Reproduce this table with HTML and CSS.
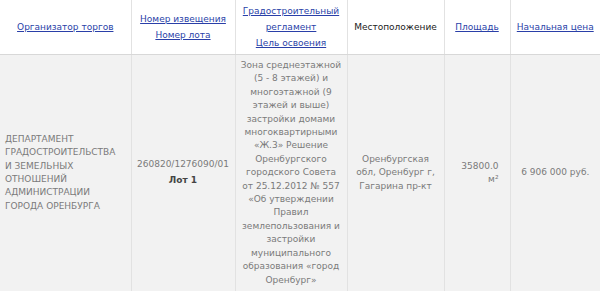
FILE: index.html
```html
<!DOCTYPE html>
<html>
<head>
<meta charset="utf-8">
<link rel="stylesheet" href="styles.css">
</head>
<body>
<table class="lots">
  <colgroup>
    <col class="c1"><col class="c2"><col class="c3"><col class="c4"><col class="c5"><col class="c6">
  </colgroup>
  <thead>
    <tr>
      <th><a href="#">Организатор торгов</a></th>
      <th><a href="#">Номер извещения</a><br><a href="#">Номер лота</a></th>
      <th><a href="#">Градостроительный регламент</a><br><a href="#">Цель освоения</a></th>
      <th>Местоположение</th>
      <th><a href="#">Площадь</a></th>
      <th><a href="#">Начальная цена</a></th>
    </tr>
  </thead>
  <tbody>
    <tr>
      <td class="left">ДЕПАРТАМЕНТ ГРАДОСТРОИТЕЛЬСТВА И ЗЕМЕЛЬНЫХ ОТНОШЕНИЙ АДМИНИСТРАЦИИ ГОРОДА ОРЕНБУРГА</td>
      <td><div>260820/1276090/01</div><div class="lot">Лот 1</div></td>
      <td class="zone">Зона среднеэтажной (5 - 8 этажей) и многоэтажной (9 этажей и выше) застройки домами многоквартирными «Ж.3» Решение Оренбургского городского Совета от&nbsp;25.12.2012 № 557 «Об утверждении Правил землепользования и застройки муниципального образования «город Оренбург»</td>
      <td>Оренбургская обл, Оренбург г, Гагарина пр-кт</td>
      <td class="right">35800.0 м²</td>
      <td>6 906 000 руб.</td>
    </tr>
  </tbody>
</table>
</body>
</html>
```

FILE: styles.css
```css
html, body {
  margin: 0;
  padding: 0;
  background: #fff;
}
.lots {
  width: 600px;
  border-collapse: collapse;
  font-family: "DejaVu Sans", Verdana, sans-serif;
  font-size: 9px;
  line-height: 13.4px;
  table-layout: fixed;
}
.c1 { width: 131px; }
.c2 { width: 104px; }
.c3 { width: 112px; }
.c4 { width: 97px; }
.c5 { width: 66px; }
.c6 { width: 90px; }
.lots th {
  font-weight: normal;
  color: #222;
  background: #fff;
  height: 54px;
  padding: 0 4px;
  line-height: 16px;
  text-align: center;
  vertical-align: middle;
  border-left: 1px solid #e2e2e2;
  border-bottom: 1px solid #d8d8d8;
}
.lots th:first-child, .lots td:first-child { border-left: none; }
.lots a {
  color: #2a3fa8;
  text-decoration: underline;
}
.lots td {
  background: #f2f2f2;
  color: #7a7a7a;
  padding: 4px 5px;
  text-align: center;
  vertical-align: middle;
  border-left: 1px solid #e2e2e2;
}
.lots td.left { text-align: left; padding-right: 12px; }
.lots td.right { text-align: right; padding-right: 11px; }
.lot {
  margin-top: 3px;
  color: #444;
  font-weight: bold;
}
```
